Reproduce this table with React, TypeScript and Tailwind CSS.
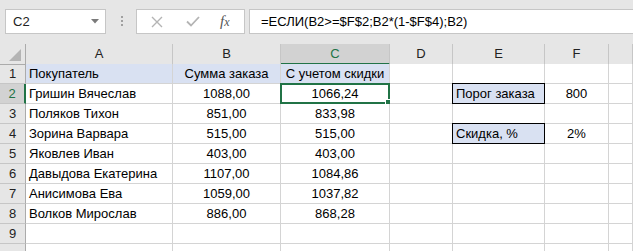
import React from "react";

const font = { fontFamily: '"Liberation Sans", Arial, sans-serif' };

type Cell = { text?: string; align?: "l" | "c"; fill?: boolean; boxed?: boolean; selected?: boolean };

const cols = ["A", "B", "C", "D", "E", "F", ""];

const rows: Cell[][] = [
  [
    { text: "Покупатель", fill: true },
    { text: "Сумма заказа", align: "c", fill: true },
    { text: "С учетом скидки", align: "c", fill: true },
    {}, {}, {}, {},
  ],
  [
    { text: "Гришин Вячеслав" },
    { text: "1088,00", align: "c" },
    { text: "1066,24", align: "c", selected: true },
    {},
    { text: "Порог заказа", fill: true, boxed: true },
    { text: "800", align: "c" },
    {},
  ],
  [{ text: "Поляков Тихон" }, { text: "851,00", align: "c" }, { text: "833,98", align: "c" }, {}, {}, {}, {}],
  [
    { text: "Зорина Варвара" },
    { text: "515,00", align: "c" },
    { text: "515,00", align: "c" },
    {},
    { text: "Скидка, %", fill: true, boxed: true },
    { text: "2%", align: "c" },
    {},
  ],
  [{ text: "Яковлев Иван" }, { text: "403,00", align: "c" }, { text: "403,00", align: "c" }, {}, {}, {}, {}],
  [{ text: "Давыдова Екатерина" }, { text: "1107,00", align: "c" }, { text: "1084,86", align: "c" }, {}, {}, {}, {}],
  [{ text: "Анисимова Ева" }, { text: "1059,00", align: "c" }, { text: "1037,82", align: "c" }, {}, {}, {}, {}],
  [{ text: "Волков Мирослав" }, { text: "886,00", align: "c" }, { text: "868,28", align: "c" }, {}, {}, {}, {}],
  [{}, {}, {}, {}, {}, {}, {}],
  [{}, {}, {}, {}, {}, {}, {}],
];

const gridCols = "grid-cols-[26px_147px_108px_109px_63px_92px_64px_1fr]";

function DataCell({ c }: { c: Cell }) {
  const base = "relative h-5 border-r border-b border-[#d4d4d4] text-[13px] leading-5 text-black whitespace-nowrap";
  const bg = c.fill ? "bg-[#d9e1f2]" : "bg-white";
  const align = c.align === "c" ? "text-center" : "text-left pl-[3px]";
  return (
    <div className={`${base} ${bg} ${align}`}>
      {c.boxed && <div className="absolute left-[-1px] top-[-1px] right-[-1px] bottom-[-1px] border border-black" />}
      {c.selected && (
        <>
          <div className="absolute left-[-1px] top-[-1px] right-[-1px] bottom-[-1px] border-2 border-[#217346]" />
          <div className="absolute right-[-3px] bottom-[-3px] h-[5px] w-[5px] bg-[#217346] border border-white box-content" />
        </>
      )}
      <span className="relative">{c.text}</span>
    </div>
  );
}

export default function App() {
  return (
    <div className="h-[251px] w-[633px] overflow-hidden bg-white" style={font}>
      {/* formula bar */}
      <div className="flex h-[44px] items-start bg-[#e6e6e6] pt-[9px]">
        <div className="ml-[5px] flex h-[25px] w-[101px] items-center justify-between border border-[#c6c6c6] bg-white pl-[7px] pr-[6px] text-[13px] text-[#222]">
          <span>C2</span>
          <svg width="8" height="5" viewBox="0 0 8 5">
            <path d="M0 0h8L4 4.5z" fill="#7a7a7a" />
          </svg>
        </div>
        <div className="ml-[15px] mt-[7px] flex flex-col gap-[2px]">
          <div className="h-[2px] w-[2px] bg-[#a0a0a0]" />
          <div className="h-[2px] w-[2px] bg-[#a0a0a0]" />
          <div className="h-[2px] w-[2px] bg-[#a0a0a0]" />
        </div>
        <div className="ml-[13px] flex h-[25px] w-[109px] items-center border border-[#c6c6c6] bg-white">
          <svg className="ml-[14px]" width="12" height="12" viewBox="0 0 12 12">
            <path d="M1 1l10 10M11 1L1 11" stroke="#b4b4b4" strokeWidth="1.4" />
          </svg>
          <svg className="ml-[23px]" width="14" height="11" viewBox="0 0 14 11">
            <path d="M1 5.5l4 4L13 1" stroke="#b4b4b4" strokeWidth="1.8" fill="none" />
          </svg>
          <span
            className="ml-[20px] text-[15px] italic text-[#555]"
            style={{ fontFamily: '"Liberation Serif", "Times New Roman", serif' }}
          >
            f<span className="text-[12px]">x</span>
          </span>
        </div>
        <div className="ml-[4px] flex h-[25px] flex-1 items-center border border-[#c6c6c6] border-r-0 bg-white pl-[11px] text-[13px] text-black whitespace-nowrap">
          =ЕСЛИ(B2&gt;=$F$2;B2*(1-$F$4);B2)
        </div>
      </div>

      {/* column headers */}
      <div className={`grid ${gridCols} h-[20px] bg-[#e6e6e6]`}>
        <div className="relative border-r border-b border-[#ababab]">
          <svg className="absolute right-[4px] bottom-[3px]" width="12" height="12" viewBox="0 0 12 12">
            <path d="M12 0V12H0z" fill="#b4b4b4" />
          </svg>
        </div>
        {cols.map((c, i) =>
          c === "C" ? (
            <div key={i} className="border-r border-[#c6c6c6] border-b-2 border-b-[#217346] bg-[#d2d2d2] text-center text-[13px] leading-[19px] text-[#217346]">
              {c}
            </div>
          ) : (
            <div key={i} className="border-r border-b border-[#c6c6c6] border-b-[#ababab] text-center text-[13px] leading-[19px] text-[#222]">
              {c}
            </div>
          )
        )}
      </div>

      {/* sheet rows; the last one is clipped by the window, so its number stays hidden */}
      {rows.map((r, ri) => (
        <div key={ri} className={`grid ${gridCols}`}>
          {ri === 1 ? (
            <div className="h-5 border-b border-[#c6c6c6] border-r-2 border-r-[#217346] bg-[#d2d2d2] text-center text-[13px] leading-5 text-[#217346]">
              {ri + 1}
            </div>
          ) : (
            <div className="h-5 border-b border-[#c6c6c6] border-r border-r-[#ababab] bg-[#e6e6e6] text-center text-[13px] leading-5 text-[#222]">
              {ri < 9 ? ri + 1 : ""}
            </div>
          )}
          {r.map((c, ci) => (
            <DataCell key={ci} c={c} />
          ))}
        </div>
      ))}
    </div>
  );
}
